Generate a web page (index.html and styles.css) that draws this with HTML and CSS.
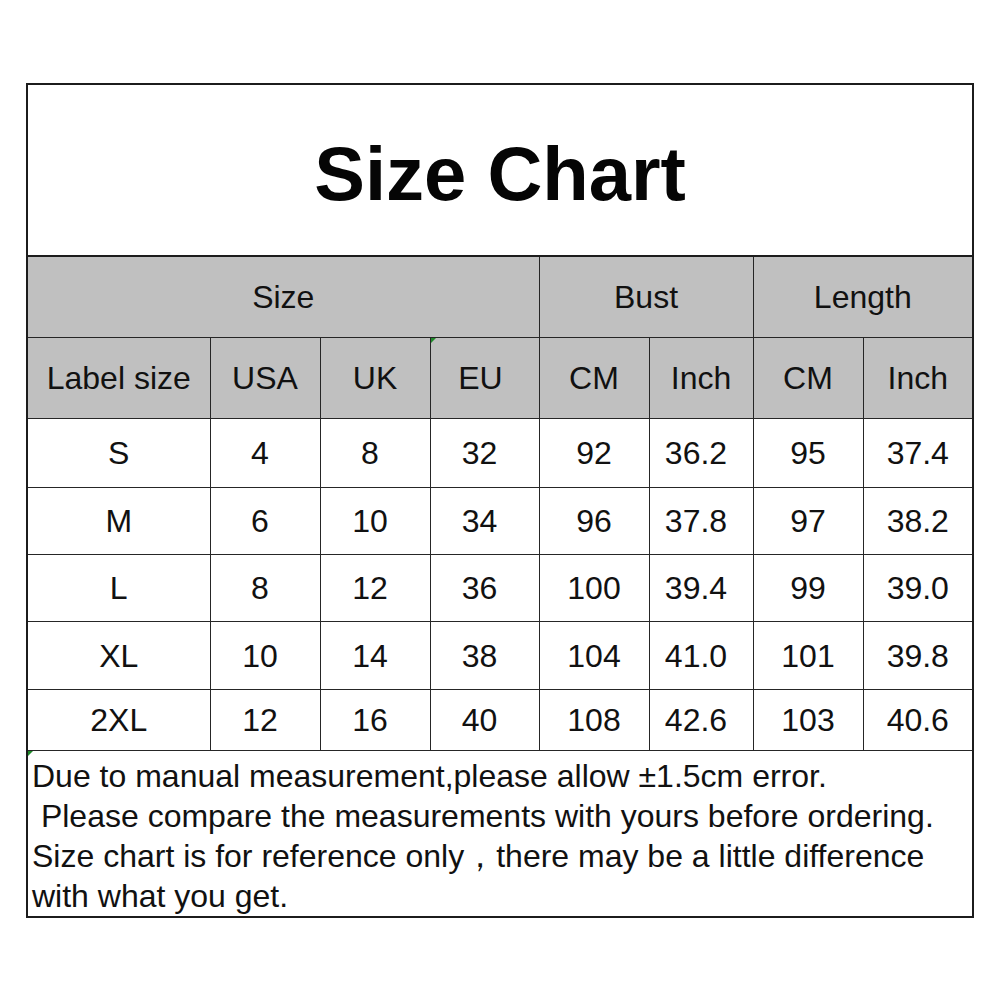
FILE: index.html
```html
<!DOCTYPE html>
<html>
<head>
<meta charset="utf-8">
<link rel="stylesheet" href="styles.css">
</head>
<body>
<table class="chart">
  <colgroup>
    <col class="c-label"><col class="c-std"><col class="c-std"><col class="c-eu">
    <col class="c-std"><col class="c-binch"><col class="c-std"><col class="c-std">
  </colgroup>
  <tr class="title-row"><td colspan="8" class="title">Size Chart</td></tr>
  <tr class="head-row">
    <td colspan="4" class="head">Size</td>
    <td colspan="2" class="head">Bust</td>
    <td colspan="2" class="head">Length</td>
  </tr>
  <tr class="head-row2">
    <td class="head">Label size</td>
    <td class="head">USA</td>
    <td class="head">UK</td>
    <td class="head marked eu"><span class="tri"></span>EU</td>
    <td class="head">CM</td>
    <td class="head">Inch</td>
    <td class="head">CM</td>
    <td class="head">Inch</td>
  </tr>
  <tr class="row r69"><td>S</td><td>4</td><td>8</td><td>32</td><td>92</td><td>36.2</td><td>95</td><td>37.4</td></tr>
  <tr class="row r67"><td>M</td><td>6</td><td>10</td><td>34</td><td>96</td><td>37.8</td><td>97</td><td>38.2</td></tr>
  <tr class="row r67"><td>L</td><td>8</td><td>12</td><td>36</td><td>100</td><td>39.4</td><td>99</td><td>39.0</td></tr>
  <tr class="row r68"><td>XL</td><td>10</td><td>14</td><td>38</td><td>104</td><td>41.0</td><td>101</td><td>39.8</td></tr>
  <tr class="row r61"><td>2XL</td><td>12</td><td>16</td><td>40</td><td>108</td><td>42.6</td><td>103</td><td>40.6</td></tr>
  <tr class="foot-row">
    <td colspan="8" class="foot marked"><span class="tri"></span><div class="note">Due to manual measurement,please allow ±1.5cm error.
 Please compare the measurements with yours before ordering.
Size chart is for reference only，there may be a little difference
with what you get.</div></td>
  </tr>
</table>
</body>
</html>
```

FILE: styles.css
```css
html, body {
  margin: 0;
  padding: 0;
  background: #ffffff;
}
body {
  padding: 83px 0 0 26px;
  font-family: "Liberation Sans", Arial, sans-serif;
  color: #111111;
}
.chart {
  border-collapse: collapse;
  table-layout: fixed;
  width: 948px;
  border: 2px solid #1c1c1c;
}
.c-label { width: 183px; }
.c-std { width: 110px; }
.c-eu { width: 109px; }
.c-binch { width: 104px; }
.chart td {
  border: 1px solid #262626;
  padding: 0;
  text-align: center;
  vertical-align: middle;
  font-size: 32px;
  line-height: 36px;
  white-space: nowrap;
}
.chart td.title {
  height: 162px;
  font-size: 76px;
  font-weight: bold;
  color: #050505;
  border-bottom: 2px solid #1c1c1c;
  padding-top: 8px;
}
.head-row td { height: 80px; }
.head-row2 td { height: 80px; }
.chart td.head {
  background: #c0c0c0;
}
.chart td.eu { padding-right: 8px; }
.row td:nth-child(2),
.row td:nth-child(3),
.row td:nth-child(4),
.row td:nth-child(6) {
  padding-right: 10px;
}
.r69 td { height: 68px; }
.r68 td { height: 67px; }
.r67 td { height: 66px; }
.r61 td { height: 60px; }
.marked { position: relative; }
.tri {
  position: absolute;
  left: 0;
  top: 0;
  width: 0;
  height: 0;
  border-top: 5px solid #1f8a2a;
  border-right: 5px solid transparent;
}
.chart td.foot {
  text-align: left;
  vertical-align: top;
  padding: 5px 0 0 4px;
  height: 158px;
}
.note {
  white-space: pre;
  font-size: 32px;
  line-height: 40px;
}
```
